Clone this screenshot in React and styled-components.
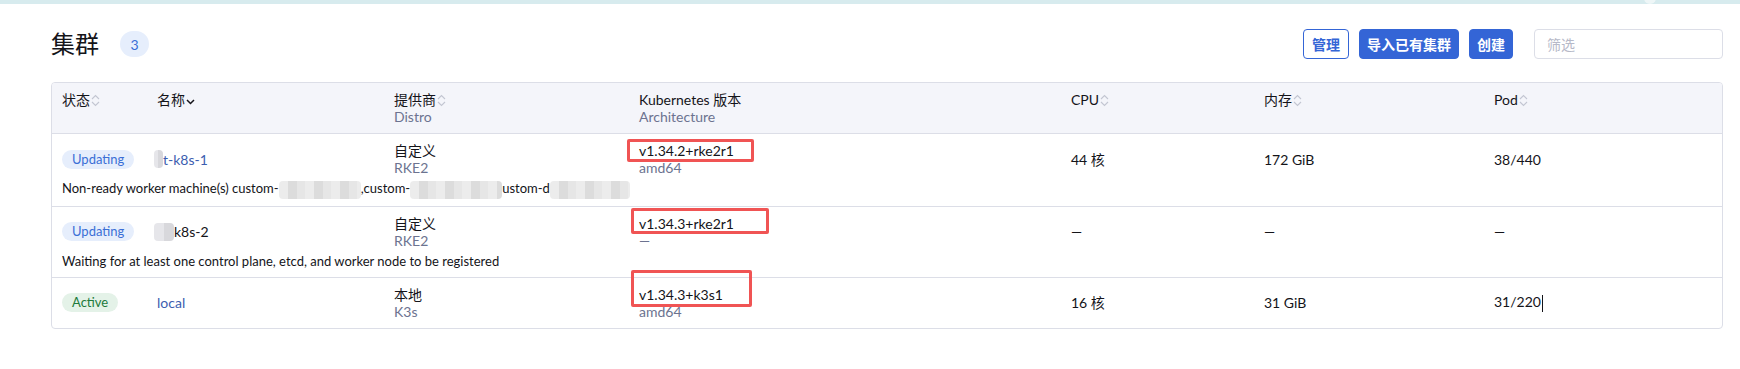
import React from "react";
import styled, { createGlobalStyle, css } from "styled-components";

const GlobalStyle = createGlobalStyle`
  body {
    margin: 0;
    background: #fff;
    font-family: Lato, "Noto Sans CJK SC", sans-serif;
    font-size: 14px;
    color: #141419;
  }
`;

const columns = [
  { key: "state", label: "状态", width: 95 },
  { key: "name", label: "名称", width: 237, sorted: true },
  { key: "provider", label: "提供商", sub: "Distro", width: 245 },
  { key: "version", label: "Kubernetes 版本", sub: "Architecture", width: 432, noSort: true },
  { key: "cpu", label: "CPU", width: 193 },
  { key: "mem", label: "内存", width: 230 },
  { key: "pod", label: "Pod" },
];

const rows = [
  {
    state: "Updating",
    blur: 9,
    name: "t-k8s-1",
    link: true,
    provider: "自定义",
    distro: "RKE2",
    version: "v1.34.2+rke2r1",
    arch: "amd64",
    box: { l: -12, t: -3, w: 127, h: 23 },
    cpu: "44 核",
    mem: "172 GiB",
    pod: "38/440",
    message: "custom",
  },
  {
    state: "Updating",
    blur: 20,
    name: "k8s-2",
    provider: "自定义",
    distro: "RKE2",
    version: "v1.34.3+rke2r1",
    arch: "—",
    box: { l: -8, t: -7, w: 138, h: 26 },
    cpu: "—",
    mem: "—",
    pod: "—",
    message: "Waiting for at least one control plane, etcd, and worker node to be registered",
  },
  {
    state: "Active",
    name: "local",
    link: true,
    provider: "本地",
    distro: "K3s",
    version: "v1.34.3+k3s1",
    arch: "amd64",
    box: { l: -8, t: -16, w: 121, h: 37 },
    cpu: "16 核",
    mem: "31 GiB",
    pod: "31/220",
    cursor: true,
  },
];

const SortIcon = ({ active }) =>
  active ? (
    <svg width="11" height="15" viewBox="0 0 11 15">
      <path d="M2 7 L5.5 10.5 L9 7" fill="none" stroke="#141419" strokeWidth="1.5" />
    </svg>
  ) : (
    <svg width="11" height="15" viewBox="0 0 11 15">
      <path d="M2 6 L5.5 2.5 L9 6" fill="none" stroke="#c3c6d2" strokeWidth="1.1" />
      <path d="M2 9 L5.5 12.5 L9 9" fill="none" stroke="#c3c6d2" strokeWidth="1.1" />
    </svg>
  );

const App = () => {
  return (
    <>
      <GlobalStyle />
      <TopStrip>
        <StripDot />
      </TopStrip>
      <Page>
        <Header>
          <TitleGroup>
            <Title>集群</Title>
            <Count>3</Count>
          </TitleGroup>
          <Actions>
            <Button $variant="outline">管理</Button>
            <Button>导入已有集群</Button>
            <Button>创建</Button>
            <Filter placeholder="筛选" />
          </Actions>
        </Header>

        <TableWrap>
          <Table>
            <colgroup>
              {columns.map((c) => (
                <col key={c.key} style={c.width ? { width: c.width } : undefined} />
              ))}
            </colgroup>
            <thead>
              <tr>
                {columns.map((c) => (
                  <Th key={c.key}>
                    <ThLabel>
                      {c.label}
                      {!c.noSort && <SortIcon active={c.sorted} />}
                    </ThLabel>
                    {c.sub && <SubText>{c.sub}</SubText>}
                  </Th>
                ))}
              </tr>
            </thead>
            <tbody>
              {rows.map((r, i) => {
                const withMsg = !!r.message;
                return (
                  <React.Fragment key={i}>
                    <tr>
                      <Td $withMsg={withMsg}>
                        <Badge $tone={r.state === "Active" ? "green" : "blue"}>{r.state}</Badge>
                      </Td>
                      <Td $withMsg={withMsg}>
                        <NameCell>
                          {r.blur && <Blur $w={r.blur} />}
                          <Name $link={r.link}>{r.name}</Name>
                        </NameCell>
                      </Td>
                      <Td $withMsg={withMsg} $top>
                        <div>{r.provider}</div>
                        <SubText>{r.distro}</SubText>
                      </Td>
                      <Td $withMsg={withMsg} $top>
                        <Version>
                          {r.version}
                          <RedMark $box={r.box} />
                        </Version>
                        <SubText>{r.arch}</SubText>
                      </Td>
                      <Td $withMsg={withMsg}>{r.cpu}</Td>
                      <Td $withMsg={withMsg}>{r.mem}</Td>
                      <Td $withMsg={withMsg}>
                        {r.pod}
                        {r.cursor && <Caret />}
                      </Td>
                    </tr>
                    {withMsg && (
                      <tr>
                        <MessageCell colSpan={columns.length}>
                          {r.message === "custom" ? (
                            <>
                              Non-ready worker machine(s) custom-
                              <Blur $w={82} $mosaic />
                              ,custom-
                              <Blur $w={92} $mosaic />
                              ustom-d
                              <Blur $w={80} $mosaic />
                            </>
                          ) : (
                            r.message
                          )}
                        </MessageCell>
                      </tr>
                    )}
                  </React.Fragment>
                );
              })}
            </tbody>
          </Table>
        </TableWrap>
      </Page>
    </>
  );
};

const TopStrip = styled.div`
  height: 4px;
  background: #d7ebee;
  position: relative;
  overflow: hidden;
`;

const StripDot = styled.div`
  position: absolute;
  left: 1644px;
  top: -8px;
  width: 12px;
  height: 12px;
  border-radius: 50%;
  background: #eef6f7;
`;

const Page = styled.div`
  padding: 25px 17px 0 51px;
`;

const Header = styled.div`
  display: flex;
  align-items: center;
  justify-content: space-between;
  height: 30px;
`;

const TitleGroup = styled.div`
  display: flex;
  align-items: center;
  gap: 21px;
`;

const Title = styled.h1`
  margin: 0;
  font-size: 24px;
  font-weight: 400;
  line-height: 30px;
  color: #141419;
`;

const Count = styled.span`
  display: inline-flex;
  align-items: center;
  justify-content: center;
  width: 29px;
  height: 26px;
  border-radius: 13px;
  background: #e6eefc;
  color: #3a6ed6;
  font-size: 14px;
`;

const Actions = styled.div`
  display: flex;
  align-items: center;
  gap: 10px;
`;

const Button = styled.button`
  height: 30px;
  padding: 0 7px;
  border-radius: 4px;
  font-family: Lato, "Noto Sans CJK SC", sans-serif;
  font-size: 14px;
  font-weight: 700;
  cursor: pointer;
  ${(p) =>
    p.$variant === "outline"
      ? css`
          background: #fff;
          color: #3465d6;
          border: 1px solid #3465d6;
          padding: 0 8px;
        `
      : css`
          background: #3465d6;
          color: #fff;
          border: 1px solid #3465d6;
        `}
`;

const Filter = styled.input`
  box-sizing: border-box;
  width: 189px;
  height: 30px;
  margin-left: 11px;
  padding: 0 12px;
  border: 1px solid #dcdee7;
  border-radius: 4px;
  font-family: Lato, "Noto Sans CJK SC", sans-serif;
  font-size: 14px;
  outline: none;
  &::placeholder {
    color: #b6b9c8;
  }
`;

const TableWrap = styled.div`
  margin-top: 23px;
  border: 1px solid #dcdee7;
  border-radius: 4px;
  overflow: hidden;
`;

const Table = styled.table`
  width: 100%;
  border-collapse: collapse;
  table-layout: fixed;
`;

const Th = styled.th`
  background: #f4f5fa;
  padding: 8px 10px 8px;
  height: 49px;
  box-sizing: border-box;
  text-align: left;
  vertical-align: top;
  font-weight: 400;
  font-size: 14px;
  line-height: 17px;
  color: #141419;
`;

const ThLabel = styled.div`
  display: flex;
  align-items: center;
  gap: 0;
  svg {
    margin-top: 1px;
  }
`;

const SubText = styled.div`
  color: #6c7390;
  font-size: 14px;
  line-height: 17px;
`;

const Td = styled.td`
  padding: 8px 10px;
  height: 49px;
  box-sizing: border-box;
  vertical-align: middle;
  font-size: 14px;
  line-height: 17px;
  border-top: 1px solid #dcdee7;
  ${(p) =>
    p.$withMsg &&
    css`
      height: 46px;
      padding-bottom: 4px;
    `}
  ${(p) =>
    p.$top &&
    css`
      vertical-align: top;
    `}
`;

const MessageCell = styled.td`
  padding: 0 10px 7px;
  font-size: 13px;
  line-height: 17px;
  white-space: nowrap;
  overflow: hidden;
`;

const Badge = styled.span`
  display: inline-block;
  padding: 0 10px;
  height: 19px;
  line-height: 19px;
  border-radius: 10px;
  font-size: 13px;
  ${(p) =>
    p.$tone === "green"
      ? css`
          background: #e4f2e8;
          color: #217a3c;
        `
      : css`
          background: #e6eefc;
          color: #3a6ed6;
        `}
`;

const NameCell = styled.div`
  display: flex;
  align-items: center;
`;

const Name = styled.span`
  color: ${(p) => (p.$link ? "#3c5eb0" : "#141419")};
`;

const Blur = styled.span`
  display: inline-block;
  vertical-align: middle;
  width: ${(p) => p.$w}px;
  height: 18px;
  margin-left: ${(p) => (p.$mosaic ? 0 : -3)}px;
  border-radius: 4px;
  background: ${(p) =>
    p.$mosaic
      ? "repeating-linear-gradient(90deg, #ececec 0 9px, #dcdcdc 9px 18px, #e6e6e6 18px 26px)"
      : "linear-gradient(90deg, #e6e6ea 0 50%, #d8d8dc 50% 100%)"};
`;

const Version = styled.div`
  position: relative;
  display: inline-block;
`;

const RedMark = styled.span`
  position: absolute;
  left: ${(p) => p.$box.l}px;
  top: ${(p) => p.$box.t}px;
  width: ${(p) => p.$box.w}px;
  height: ${(p) => p.$box.h}px;
  box-sizing: border-box;
  border: 3px solid #f05454;
  border-radius: 2px;
  pointer-events: none;
`;

const Caret = styled.span`
  display: inline-block;
  width: 1px;
  height: 17px;
  background: #141419;
  vertical-align: middle;
  margin-left: 1px;
`;

export default App;
